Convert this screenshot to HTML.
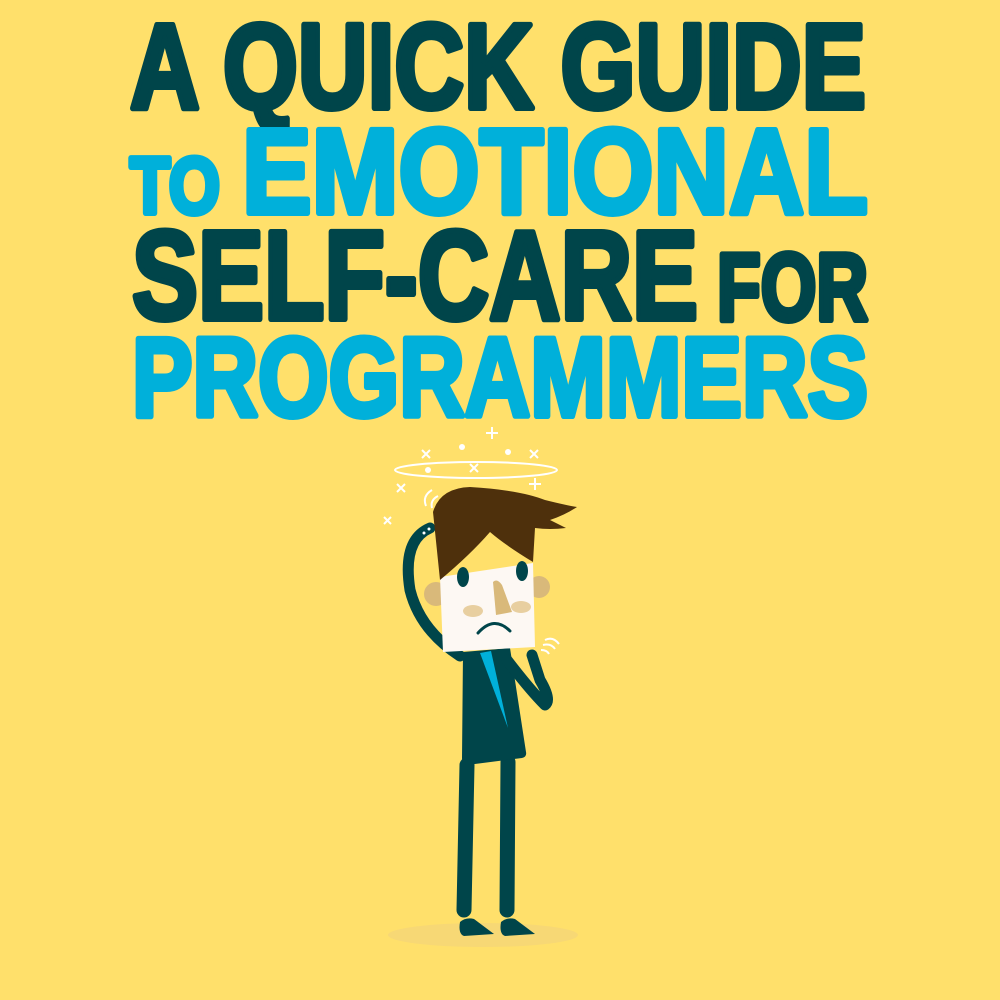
<!DOCTYPE html>
<html><head><meta charset="utf-8"><style>
html,body{margin:0;padding:0;background:#FFE06B;}
svg{display:block}
</style></head><body>
<svg width="1000" height="1000" viewBox="0 0 1000 1000" xmlns="http://www.w3.org/2000/svg">
<rect width="1000" height="1000" fill="#FFE06B"/>
<g font-family="Liberation Sans, sans-serif" font-weight="bold" stroke-linejoin="round">
<text x="130" y="108" font-size="121" textLength="736" lengthAdjust="spacingAndGlyphs" fill="#00454A" stroke="#00454A" stroke-width="6">A QUICK GUIDE</text>
<text x="130" y="213" font-size="80" textLength="90" lengthAdjust="spacingAndGlyphs" fill="#00B0DA" stroke="#00B0DA" stroke-width="6">TO</text>
<text x="242" y="213" font-size="121" textLength="626" lengthAdjust="spacingAndGlyphs" fill="#00B0DA" stroke="#00B0DA" stroke-width="6">EMOTIONAL</text>
<text x="132" y="319" font-size="126" textLength="566" lengthAdjust="spacingAndGlyphs" fill="#00454A" stroke="#00454A" stroke-width="6">SELF-CARE</text>
<text x="717" y="320" font-size="96" textLength="151" lengthAdjust="spacingAndGlyphs" fill="#00454A" stroke="#00454A" stroke-width="6">FOR</text>
<text x="132" y="416" font-size="112" textLength="736" lengthAdjust="spacingAndGlyphs" fill="#00B0DA" stroke="#00B0DA" stroke-width="6">PROGRAMMERS</text>
</g>
<ellipse cx="483" cy="935" rx="95" ry="12" fill="#E8C98A" opacity="0.35"/>
<ellipse cx="476" cy="470" rx="81" ry="8" fill="none" stroke="#fff" stroke-width="2"/>
<g stroke="#fff" stroke-width="2" fill="none">
<path d="M422 450l8 8M430 450l-8 8"/><path d="M470 464l8 8M478 464l-8 8"/><path d="M530 450l8 8M538 450l-8 8"/>
<path d="M397 484l8 8M405 484l-8 8"/><path d="M384 517l7 7M391 517l-7 7"/>
<path d="M492 427v12M486 433h12"/><path d="M535 478v12M529 484h12"/>
</g>
<circle cx="462" cy="447" r="3" fill="#fff"/><circle cx="508" cy="452" r="3" fill="#fff"/><circle cx="428" cy="470" r="3" fill="#fff"/>
<g stroke="#fff" stroke-width="2" fill="none"><path d="M426 506q-4 -10 6 -16M432 508q-2 -8 6 -12M438 508q0 -6 5 -8"/><path d="M545 640q8 -4 14 4M543 645q8 -2 12 4M541 650q6 0 8 4"/></g>
<path d="M467 765L464 910" stroke="#00454A" stroke-width="15" stroke-linecap="round"/>
<path d="M508 762L507 910" stroke="#00454A" stroke-width="15" stroke-linecap="round"/>
<path d="M460 922q6-5 14-3l20 15l-30 2q-6-2-4-14z" fill="#00454A"/>
<path d="M501 922q6-5 14-3l20 15l-30 2q-6-2-4-14z" fill="#00454A"/>
<path d="M463 652L510 648L526 752Q527 757 522 758L467 765Q462 764 462 758Z" fill="#00454A"/>
<path d="M480 653L491 651L508 728Z" fill="#00B0DA"/>
<path d="M507 660Q530 690 545 705Q552 700 540 680L532 655" stroke="#00454A" stroke-width="11" fill="none" stroke-linecap="round" stroke-linejoin="round"/>
<path d="M430 528Q402 540 410 590Q420 630 460 656" stroke="#00454A" stroke-width="11" fill="none" stroke-linecap="round"/>
<circle cx="424" cy="533" r="1.5" fill="#fff"/><circle cx="429" cy="529" r="1.5" fill="#fff"/>
<circle cx="436" cy="594" r="12" fill="#D9B97A"/><circle cx="539" cy="587" r="11" fill="#D9B97A"/>
<path d="M440 577L533 563L535 647L443 652Z" fill="#FDF8F3"/>
<path d="M433 512Q440 488 470 487Q520 490 545 500Q565 505 577 507Q565 515 550 520Q560 525 566 528Q550 530 535 528L533 562Q505 545 490 532Q470 555 440 580Z" fill="#4E300C"/>
<ellipse cx="463" cy="577" rx="6" ry="10" fill="#00454A"/><ellipse cx="522" cy="571" rx="6" ry="10" fill="#00454A"/>
<path d="M493 582Q497 578 502 585L512 612L496 615Z" fill="#D9B97A"/>
<ellipse cx="473" cy="611" rx="10" ry="6" fill="#E8CFA0"/><ellipse cx="521" cy="607" rx="10" ry="6" fill="#E8CFA0"/>
<path d="M478 633Q494 615 510 631" stroke="#00454A" stroke-width="3" fill="none" stroke-linecap="round"/>
</svg>
</body></html>
